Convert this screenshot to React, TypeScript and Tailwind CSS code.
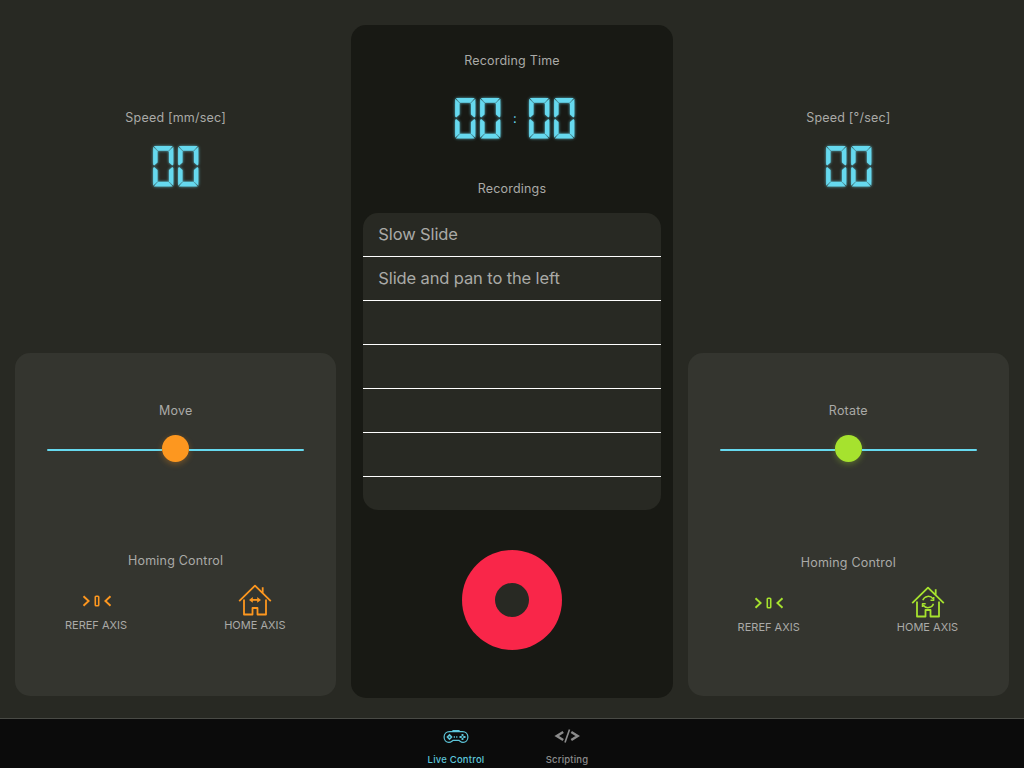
import type { ReactNode } from "react";

const SEGMENTS: Record<string, string> = {
  a: "0.8,0.1 20.2,0.1 15.8,4.7 5.2,4.7",
  f: "0.1,0.7 4.7,5.3 4.7,16.6 1.2,19.8 0.1,18.8",
  b: "20.9,0.7 16.3,5.3 16.3,16.6 19.8,19.8 20.9,18.8",
  e: "0.1,40.3 4.7,35.7 4.7,24.4 1.2,21.2 0.1,22.2",
  c: "20.9,40.3 16.3,35.7 16.3,24.4 19.8,21.2 20.9,22.2",
  d: "0.8,40.9 20.2,40.9 15.8,36.3 5.2,36.3",
  g: "2,20.5 5,18.4 16,18.4 19,20.5 16,22.6 5,22.6",
};

const LIT = [
  "abcdef",
  "bc",
  "abged",
  "abgcd",
  "fgbc",
  "afgcd",
  "afgecd",
  "abc",
  "abcdefg",
  "abcdfg",
];

function Digit({ value }: { value: number }) {
  return (
    <svg
      width="20.5"
      height="40.5"
      viewBox="0 0 21 41"
      preserveAspectRatio="none"
      className="overflow-visible drop-shadow-[0_0_1.5px_#66d9efcc]"
    >
      {LIT[value].split("").map((s) => (
        <polygon key={s} points={SEGMENTS[s]} fill="#66d9ef" />
      ))}
    </svg>
  );
}

function Display({ value }: { value: number }) {
  return (
    <div className="flex gap-[4.5px]" role="img" aria-label={String(value)}>
      <Digit value={Math.floor(value / 10)} />
      <Digit value={value % 10} />
    </div>
  );
}

function RerefIcon() {
  return (
    <svg width="30" height="14" viewBox="0 0 30 14" fill="none" stroke="currentColor" strokeWidth="1.9">
      <path d="M1.5 2.2 6.6 7 1.5 11.8M28.5 2.2 23.4 7l5.1 4.8" />
      <rect x="13.3" y="2.3" width="3.4" height="9.4" rx="0.8" strokeWidth="1.6" />
    </svg>
  );
}

function HomeIcon({ children }: { children: ReactNode }) {
  return (
    <svg width="34" height="32" viewBox="0 0 34 32" fill="none" stroke="currentColor" strokeWidth="1.8" strokeLinejoin="round">
      <path d="M1.2 17.2 17 1.6l15.8 15.6M24.7 9V3.2" />
      <path d="M6 15.5v15h8.5V24h5v6.5H28v-15" />
      {children}
    </svg>
  );
}

function MoveGlyph() {
  return (
    <>
      <path d="M13 15.900h8" strokeWidth="1.800" />
      <path d="m14.800 13.100-3.800 2.800 3.800 2.800zM19.200 13.100l3.800 2.800-3.800 2.800z" fill="currentColor" stroke="none" />
    </>
  );
}

function RotateGlyph() {
  return (
    <path
      d="M11.800 14.300a5.800 5.800 0 0 1 10.200-1.500M22.700 11v3.200h-3.200M22.500 17.700a5.800 5.800 0 0 1-10.200 1.500M11.500 21v-3.200h3.200"
      strokeWidth="1.500"
    />
  );
}

function GamepadIcon() {
  return (
    <svg width="26" height="14" viewBox="0 0 26 14" fill="none" stroke="currentColor" strokeWidth="1.200">
      <path d="M6.500 1.700h13c3.200 0 5.400 2.300 5.400 5.300s-2 5.400-4.800 5.400c-1.900 0-2.800-1.100-4-2H9.900c-1.200.9-2.100 2-4 2C3.100 12.400 1.100 10 1.100 7s2.200-5.300 5.400-5.300Z" />
      <path d="M9.200 1.500 10.200 .6h5.600l1 .9" />
      <path d="M6.500 4.900 8.600 7 6.500 9.100 4.400 7Z" strokeWidth="1.500" />
      <path d="M10.700 7h1.300M13.100 7h1.300" strokeWidth="1.300" />
      <path d="M19.500 4v2.200M19.500 7.800v2.200M16.500 7h2.200M20.300 7h2.200" strokeWidth="1.900" />
    </svg>
  );
}

function CodeIcon() {
  return (
    <svg width="26" height="14" viewBox="0 0 26 14" fill="none" stroke="currentColor">
      <path d="M9.200 3 2.800 7l6.400 4M17.300 3l6.400 4-6.400 4" strokeWidth="2.500" />
      <path d="M15.500 .5 11 13.500" strokeWidth="1.600" />
    </svg>
  );
}

interface AxisProps {
  unit: string;
  label: string;
  accent: string;
  knob: string;
  homing: string;
  homePadding: string;
  glyph: ReactNode;
}

function Axis({ unit, label, accent, knob, homing, homePadding, glyph }: AxisProps) {
  return (
    <section className="flex flex-col">
      <div className="flex h-[353px] flex-col items-center pt-[108px]">
        <h2 className="text-[12.5px] leading-5 tracking-[0.2px]">{unit}</h2>
        <div className="mt-[17.5px]">
          <Display value={0} />
        </div>
      </div>
      <div className="h-[343px] rounded-[15px] bg-[#34352f] px-8 pt-12">
        <h3 className="text-center text-[12.5px] leading-5 tracking-[0.2px]">{label}</h3>
        <div className="mt-[14px] flex h-7 items-center">
          <div className="mt-0.5 h-0.5 flex-1 rounded-l bg-[#66d9ef]" />
          <div className={`-mt-px size-[27px] rounded-full ${knob}`} />
          <div className="mt-0.5 h-0.5 flex-1 rounded-r bg-[#66d9ef]" />
        </div>
        <h3 className={`text-center text-[12.5px] leading-5 tracking-[0.2px] ${homing}`}>Homing Control</h3>
        <div className="mt-[13px] flex justify-between pl-[17px] pr-[17.5px]">
          <button className="flex w-16 flex-col items-center">
            <span className={`flex h-8 items-center pl-px pt-px ${accent}`}>
              <RerefIcon />
            </span>
            <span className="mt-0.5 whitespace-nowrap text-[11px] leading-[14px]">REREF AXIS</span>
          </button>
          <button className="flex w-16 flex-col items-center">
            <span className={`flex h-8 items-center ${homePadding} ${accent}`}>
              <HomeIcon>{glyph}</HomeIcon>
            </span>
            <span className="mt-0.5 whitespace-nowrap text-[11px] leading-[14px]">HOME AXIS</span>
          </button>
        </div>
      </div>
    </section>
  );
}

const RECORDINGS = ["Slow Slide", "Slide and pan to the left", "", "", "", ""];

export default function App() {
  return (
    <div className="flex h-[768px] w-[1024px] flex-col overflow-hidden bg-[#282923] font-[Inter,sans-serif] text-[#aaaaa7]">
      <main className="grid h-[718px] grid-cols-3 gap-[15px] px-[15px]">
        <Axis
          unit="Speed [mm/sec]"
          label="Move"
          accent="text-[#fd971f]"
          knob="bg-[#fd971f] shadow-[0_2px_6px_#fd971f55]"
          homing="mt-[88px]"
          homePadding="pl-px"
          glyph={<MoveGlyph />}
        />
        <section className="mt-[25px] flex h-[673px] flex-col items-center rounded-[15px] bg-[#181914] px-3 pt-[26px]">
          <h2 className="text-[12.5px] leading-5 tracking-[0.2px]">Recording Time</h2>
          <div className="mt-[26.5px] flex h-[40.5px] items-center pl-[6px]">
            <Display value={0} />
            <span className="w-[29px] pt-0.5 text-center text-[13px] text-[#66d9ef]">:</span>
            <Display value={0} />
          </div>
          <h2 className="mt-[41px] text-[12.5px] leading-5 tracking-[0.2px]">Recordings</h2>
          <ul className="mt-[14px] h-[297px] w-full overflow-hidden rounded-[15px] bg-[#282923]">
            {RECORDINGS.map((name, i) => (
              <li key={i} className="h-11 border-b border-white pl-[15px] text-[16.5px] leading-[43px] tracking-[-0.12px]">
                {name}
              </li>
            ))}
          </ul>
          <button className="mt-10 flex size-[100px] items-center justify-center rounded-full bg-[#f92649]">
            <span className="size-[34px] rounded-full bg-[#282923]" />
          </button>
        </section>
        <Axis
          unit="Speed [°/sec]"
          label="Rotate"
          accent="text-[#a6e22e]"
          knob="bg-[#a6e22e] shadow-[0_2px_6px_#a6e22e55]"
          homing="mt-[90px]"
          homePadding="pl-0"
          glyph={<RotateGlyph />}
        />
      </main>
      <nav className="flex h-[50px] justify-center border-t border-[#494a45] bg-[#0b0b0b] pr-px text-[9.5px] font-medium leading-3">
        <a className="flex w-[111px] flex-col items-center pt-[10.5px] text-[#5dc5d9]">
          <GamepadIcon />
          <span className="mt-[10.5px] tracking-[0.2px]">Live Control</span>
        </a>
        <a className="flex w-[111px] flex-col items-center pt-[10px] text-[#8b8b8b]">
          <CodeIcon />
          <span className="mt-[11px] tracking-[0.2px]">Scripting</span>
        </a>
      </nav>
    </div>
  );
}
